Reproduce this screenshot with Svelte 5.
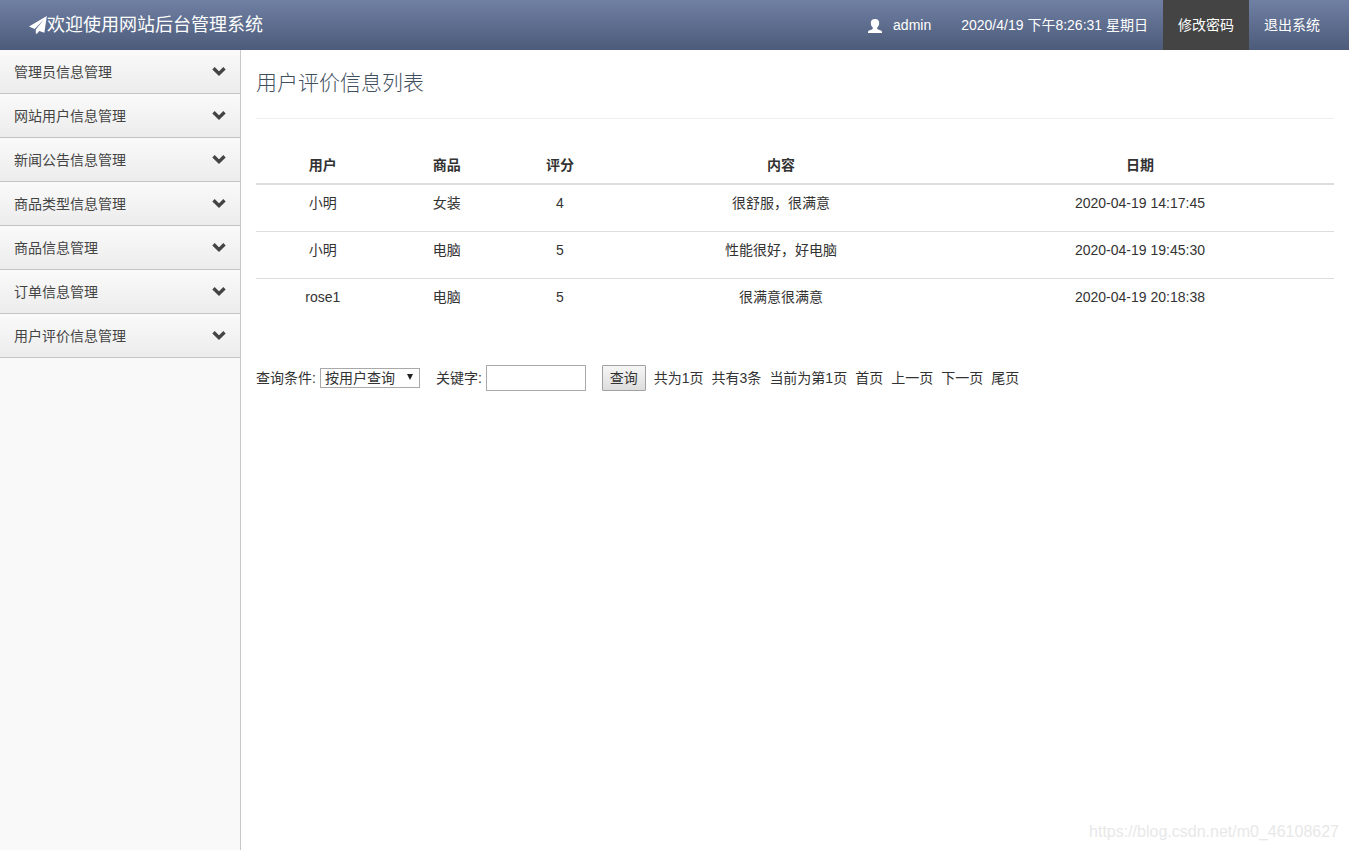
<script>
  const menus = ['管理员信息管理', '网站用户信息管理', '新闻公告信息管理', '商品类型信息管理', '商品信息管理', '订单信息管理', '用户评价信息管理'];
  const rows = [
    ['小明', '女装', '4', '很舒服，很满意', '2020-04-19 14:17:45'],
    ['小明', '电脑', '5', '性能很好，好电脑', '2020-04-19 19:45:30'],
    ['rose1', '电脑', '5', '很满意很满意', '2020-04-19 20:18:38']
  ];
  const columns = ['用户', '商品', '评分', '内容', '日期'];
  const pages = ['首页', '上一页', '下一页', '尾页'];
  let field = $state('user');
  let keyword = $state('');
</script>

<div class="page">
  <header class="navbar">
    <a class="brand" href="#home">
      <svg width="18" height="18" viewBox="0 0 18 18" aria-hidden="true">
        <path fill="#fff" d="M17.800 0 15.400 16.800 10.200 14.900 8 17.800 6.800 17.500V13.600L15 3.600 5.600 12.900 0 10.600Z" />
      </svg>
      <span>欢迎使用网站后台管理系统</span>
    </a>
    <nav class="tools">
      <a class="user" href="#me">
        <svg width="14" height="16" viewBox="0 0 14 16" aria-hidden="true">
          <path fill="#fff" d="M7 2C9.800 2 11.200 3.500 11.200 6c0 2-.9 3.600-2 4.500v1c0 .5.3.8.9 1l2.800 1c.7.3 1.100.8 1.100 1.400v1.100H0v-1.100c0-.6.4-1.100 1.100-1.400l2.800-1c.6-.2.9-.5.9-1v-1C3.700 9.600 2.800 8 2.800 6 2.800 3.500 4.200 2 7 2Z" />
        </svg>
        <span>admin</span>
      </a>
      <span class="clock">2020/4/19 下午8:26:31 星期日</span>
      <a class="active" href="#password">修改密码</a>
      <a href="#logout">退出系统</a>
    </nav>
  </header>

  <div class="body">
    <aside class="sidebar">
      {#each menus as menu}
        <button type="button" class="menu">
          <span>{menu}</span>
          <svg width="14" height="12" viewBox="0 0 14 12" aria-hidden="true">
            <path fill="none" stroke="#444" stroke-width="3.400" d="M1.500 2.300 7 7.600 12.500 2.300" />
          </svg>
        </button>
      {/each}
    </aside>

    <main>
      <h1>用户评价信息列表</h1>
      <table>
        <colgroup>
          <col class="c-user" /><col class="c-item" /><col class="c-score" /><col class="c-text" /><col />
        </colgroup>
        <thead>
          <tr>{#each columns as column}<th scope="col">{column}</th>{/each}</tr>
        </thead>
        <tbody>
          {#each rows as row}
            <tr>{#each row as cell}<td>{cell}</td>{/each}</tr>
          {/each}
        </tbody>
      </table>

      <form class="query" onsubmit={(e) => e.preventDefault()}>
        <div class="field">
          <label for="field">查询条件:</label>
          <div class="picker">
            <select id="field" bind:value={field}>
              <option value="user">按用户查询</option>
              <option value="item">按商品查询</option>
            </select>
            <svg width="6" height="8" viewBox="0 0 6 8" aria-hidden="true"><path fill="#222" d="M0 0H6L3 6Z" /></svg>
          </div>
        </div>
        <div class="field">
          <label for="keyword">关键字:</label>
          <input id="keyword" type="text" bind:value={keyword} />
        </div>
        <div class="pager">
          <button type="submit">查询</button>
          <span>共为1页</span>
          <span>共有3条</span>
          <span>当前为第1页</span>
          {#each pages as page}<a href="#page">{page}</a>{/each}
        </div>
      </form>
    </main>
  </div>
  <div class="watermark">https://blog.csdn.net/m0_46108627</div>
</div>

<style>
  :global(body) {
    margin: 0;
    background: #fff;
  }
  .page {
    position: relative;
    display: flex;
    flex-direction: column;
    min-height: 100vh;
    font: 14px/20px "Liberation Sans", "Noto Sans CJK SC", sans-serif;
    color: #333;
  }
  .page * {
    box-sizing: border-box;
  }
  a {
    color: inherit;
    text-decoration: none;
  }
  .navbar {
    display: flex;
    justify-content: space-between;
    height: 50px;
    padding: 0 14px 0 29px;
    background: linear-gradient(#7080a4, #4c5b79);
    color: #fff;
  }
  .brand {
    display: flex;
    align-items: center;
    font-size: 18px;
  }
  .tools {
    display: flex;
  }
  .tools > * {
    display: flex;
    align-items: center;
    padding: 0 15px;
  }
  .user {
    gap: 11px;
  }
  .tools .active {
    background: #444;
  }
  .body {
    display: flex;
    flex: 1;
  }
  .sidebar {
    flex: none;
    width: 241px;
    background: #f9f9f9;
    border-right: 1px solid #c8c8c8;
  }
  .menu {
    display: flex;
    align-items: center;
    justify-content: space-between;
    width: 100%;
    height: 44px;
    padding: 0 14px;
    border: 0;
    border-bottom: 1px solid #c4c4c4;
    background: linear-gradient(#fafafa, #ececec);
    color: #444;
    font: inherit;
  }
  main {
    flex: 1;
    min-width: 0;
    padding: 16px 15px;
  }
  h1 {
    margin: 0 0 27px;
    padding-bottom: 18px;
    border-bottom: 1px solid #eee;
    color: #3f4f5e;
    font-size: 21px;
    line-height: 34px;
    font-weight: 300;
  }
  table {
    width: 100%;
    table-layout: fixed;
    border-collapse: collapse;
    text-align: center;
  }
  .c-user { width: 12.4%; }
  .c-item { width: 10.6%; }
  .c-score { width: 10.4%; }
  .c-text { width: 30.6%; }
  th {
    height: 38px;
    padding: 8px;
    border-bottom: 2px solid #ddd;
  }
  td {
    height: 47px;
    padding: 8px;
    border-top: 1px solid #ddd;
    vertical-align: top;
  }
  .query {
    display: flex;
    flex-wrap: wrap;
    align-items: center;
    gap: 16px;
    margin-top: 40px;
  }
  .field {
    display: flex;
    align-items: center;
    gap: 4px;
  }
  .picker {
    display: grid;
    align-items: center;
  }
  .picker > * {
    grid-area: 1 / 1;
  }
  .picker svg {
    justify-self: end;
    margin-right: 7px;
    pointer-events: none;
  }
  select {
    appearance: none;
    width: 100px;
    height: 20px;
    padding: 0 4px;
    border: 1px solid #a9a9a9;
    border-radius: 0;
    background: #fff;
    color: inherit;
    font: inherit;
    line-height: 18px;
  }
  input {
    width: 100px;
    height: 26px;
    padding: 2px;
    border: 1px solid #a9a9a9;
    background: #fff;
    color: inherit;
    font: inherit;
  }
  .pager {
    display: flex;
    flex-wrap: wrap;
    align-items: center;
    gap: 8px;
  }
  .pager button {
    height: 26px;
    padding: 0 7px;
    border: 1px solid #a0a0a0;
    border-radius: 1px;
    background: linear-gradient(#f6f6f6, #dddddd);
    color: inherit;
    font: inherit;
  }
  .watermark {
    position: absolute;
    right: 10px;
    bottom: 8px;
    color: #e8e8e8;
    font-size: 16px;
  }
</style>
